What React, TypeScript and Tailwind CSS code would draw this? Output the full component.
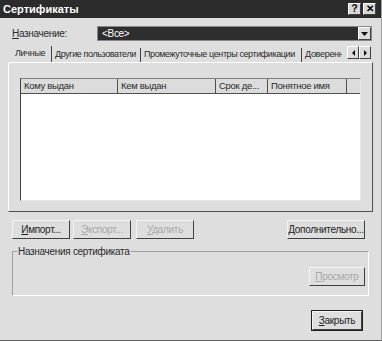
import React from "react";

const F = { fontFamily: '"Liberation Sans", Arial, sans-serif', letterSpacing: "-0.3px" };

function Btn({ children, disabled, def, className = "" }: { children: React.ReactNode; disabled?: boolean; def?: boolean; className?: string }) {
  return (
    <div
      className={
        "flex items-center justify-center h-[19px] text-[10px] whitespace-nowrap bg-[#dedede] border border-t-[#f4f4f4] border-l-[#f4f4f4] border-r-[#404040] border-b-[#404040] " +
        (def ? "outline outline-1 outline-[#202020] " : "") +
        (disabled ? "text-[#a8a8a8] " : "text-[#222] ") +
        className
      }
    >
      {children}
    </div>
  );
}

export default function App() {
  return (
    <div style={F} className="w-[382px] h-[341px] bg-[#dedede] text-[#2a2a2a] flex flex-col border-r border-r-[#a0a0a0] border-b border-b-[#606060] overflow-hidden">
      <div className="h-[18px] bg-[#2c2c2c] flex items-center pl-[3px] pr-[5px]">
        <span className="text-white font-bold text-[11px] flex-1" style={{ letterSpacing: "0px" }}>Сертификаты</span>
        <div className="flex gap-[2px]">
          <div className="w-[13px] h-[12px] bg-[#d8d8d8] border border-t-white border-l-white border-r-[#404040] border-b-[#404040] flex items-center justify-center text-[10px] font-bold text-black leading-none">?</div>
          <div className="w-[13px] h-[12px] bg-[#d8d8d8] border border-t-white border-l-white border-r-[#404040] border-b-[#404040] flex items-center justify-center text-[10px] font-bold text-black leading-none">✕</div>
        </div>
      </div>

      <div className="flex items-center mt-[8px] pl-[12px] pr-[9px] h-[15px]">
        <span className="text-[10px] w-[85px]"><span className="underline">Н</span>азначение:</span>
        <div className="flex-1 h-[15px] bg-[#2e2e2e] flex items-center border border-[#888]">
          <span className="text-white text-[10px] pl-[4px] flex-1">&lt;Все&gt;</span>
          <div className="w-[13px] h-[13px] bg-[#dcdcdc] border border-t-white border-l-white border-r-[#404040] border-b-[#404040] flex items-center justify-center">
            <svg width="7" height="4" viewBox="0 0 7 4"><path d="M0 0h7L3.5 4z" fill="#111" /></svg>
          </div>
        </div>
      </div>

      <div className="mx-[8px] mt-[5px] flex flex-col">
        <div className="flex items-end h-[16px] text-[9px] whitespace-nowrap relative">
          <div className="h-[16px] w-[44px] pl-[7px] flex items-center border-r border-r-[#404040] text-[9px]">Личные</div>
          <div className="h-[14px] w-[89px] pl-[3px] flex items-center border-r border-r-[#404040]" style={{ letterSpacing: "-0.4px" }}>Другие пользователи</div>
          <div className="h-[14px] w-[161px] pl-[3px] flex items-center border-r border-r-[#404040]" style={{ letterSpacing: "-0.4px" }}>Промежуточные центры сертификации</div>
          <div className="h-[14px] pl-[3px] flex items-center w-[40px] overflow-hidden">Доверенн</div>
          <div className="absolute right-[2px] top-[0px] flex">
            <div className="w-[12px] h-[13px] bg-[#dcdcdc] border border-t-white border-l-white border-r-[#404040] border-b-[#404040] flex items-center justify-center">
              <svg width="3" height="6" viewBox="0 0 3 6"><path d="M3 0v6L0 3z" fill="#111" /></svg>
            </div>
            <div className="w-[12px] h-[13px] bg-[#dcdcdc] border border-t-white border-l-white border-r-[#404040] border-b-[#404040] flex items-center justify-center">
              <svg width="3" height="6" viewBox="0 0 3 6"><path d="M0 0v6L3 3z" fill="#111" /></svg>
            </div>
          </div>
        </div>
        <div className="h-[150px] border border-t-white border-l-white border-r-[#505050] border-b-[#505050] px-[11px] pt-[15px] pb-[10px]">
          <div className="h-full bg-white border border-t-[#808080] border-l-[#404040] border-r-[#e8e8e8] border-b-[#e8e8e8] flex flex-col">
            <div className="flex h-[15px] text-[9.5px] whitespace-nowrap bg-[#dcdcdc]">
              <div className="w-[97px] pl-[3px] flex items-center border-r border-r-[#505050] border-b border-b-[#505050]">Кому выдан</div>
              <div className="w-[98px] pl-[3px] flex items-center border-r border-r-[#505050] border-b border-b-[#505050]">Кем выдан</div>
              <div className="w-[52px] pl-[3px] flex items-center border-r border-r-[#505050] border-b border-b-[#505050]">Срок де...</div>
              <div className="w-[79px] pl-[3px] flex items-center border-r border-r-[#505050] border-b border-b-[#505050]">Понятное имя</div>
              <div className="flex-1 border-b border-b-[#505050]"></div>
            </div>
          </div>
        </div>
      </div>

      <div className="flex items-center mt-[8px] pl-[12px] pr-[16px]">
        <Btn className="w-[58px]"><span><span className="underline">И</span>мпорт...</span></Btn>
        <Btn disabled className="w-[58px] ml-[3px]"><span><span className="underline">Э</span>кспорт...</span></Btn>
        <Btn disabled className="w-[58px] ml-[5px]"><span><span className="underline">У</span>далить</span></Btn>
        <div className="flex-1" />
        <Btn className="w-[78px]"><span><span className="underline">Д</span>ополнительно...</span></Btn>
      </div>

      <div className="relative mx-[12px] mt-[12px] h-[45px] border border-t-[#a0a0a0] border-l-[#a0a0a0] border-r-white border-b-white">
        <span className="absolute -top-[8px] left-[4px] bg-[#dedede] px-[1px] text-[10px] whitespace-nowrap">Назначения сертификата</span>
        <div className="absolute right-[3px] top-[15px]">
          <Btn disabled className="w-[56px]"><span><span className="underline">П</span>росмотр</span></Btn>
        </div>
      </div>

      <div className="flex justify-end pr-[19px] mt-[15px]">
        <Btn def className="w-[50px]"><span><span className="underline">З</span>акрыть</span></Btn>
      </div>
    </div>
  );
}
